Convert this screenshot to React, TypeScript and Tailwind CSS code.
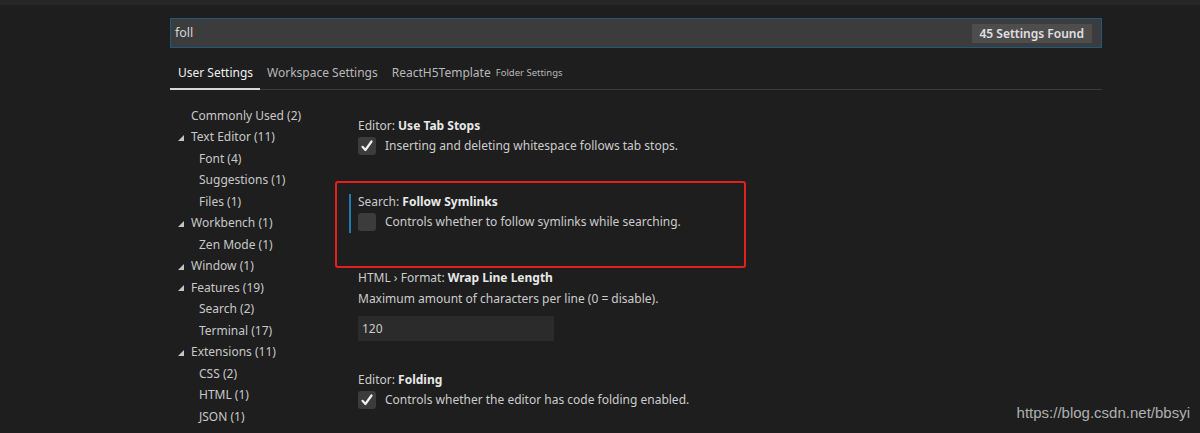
import React from "react";

const font = { fontFamily: '"Noto Sans", "Open Sans", sans-serif' };

function Tri() {
  return (
    <svg width="6" height="6" viewBox="0 0 6 6" className="mr-[7px] mt-[1px]">
      <polygon points="6,0 6,6 0,6" fill="#c5c5c5" />
    </svg>
  );
}

type Node = { label: string; count: number; level: 0 | 1; tri?: boolean };
const tree: Node[] = [
  { label: "Commonly Used", count: 2, level: 0 },
  { label: "Text Editor", count: 11, level: 0, tri: true },
  { label: "Font", count: 4, level: 1 },
  { label: "Suggestions", count: 1, level: 1 },
  { label: "Files", count: 1, level: 1 },
  { label: "Workbench", count: 1, level: 0, tri: true },
  { label: "Zen Mode", count: 1, level: 1 },
  { label: "Window", count: 1, level: 0, tri: true },
  { label: "Features", count: 19, level: 0, tri: true },
  { label: "Search", count: 2, level: 1 },
  { label: "Terminal", count: 17, level: 1 },
  { label: "Extensions", count: 11, level: 0, tri: true },
  { label: "CSS", count: 2, level: 1 },
  { label: "HTML", count: 1, level: 1 },
  { label: "JSON", count: 1, level: 1 },
];

function Check({ on }: { on: boolean }) {
  return (
    <div className="w-[18px] h-[18px] rounded-[3px] bg-[#3c3c3c] flex items-center justify-center shrink-0">
      {on && (
        <svg width="14" height="14" viewBox="0 0 14 14">
          <path d="M2.5 7.8 L5.4 11 L11.5 2.5" stroke="#f0f0f0" strokeWidth="2.2" fill="none" strokeLinecap="round" strokeLinejoin="round" />
        </svg>
      )}
    </div>
  );
}

function Title({ cat, name }: { cat: string; name: string }) {
  return (
    <div className="h-[20px] leading-[20px] text-[12px] text-[#cccccc]">
      {cat}
      <span className="font-bold text-[#e8e8e8]">{name}</span>
    </div>
  );
}

function CheckRow({ on, text }: { on: boolean; text: string }) {
  return (
    <div className="h-[20px] flex items-center gap-[9px] text-[12px] text-[#cccccc]">
      <Check on={on} />
      <span className="leading-[20px]">{text}</span>
    </div>
  );
}

export default function App() {
  return (
    <div className="w-[1200px] h-[433px] bg-[#1e1e1e] overflow-hidden relative" style={font}>
      <div className="h-[5px] bg-[#262626]" />
      <div className="ml-[170px] w-[932px]">
        <div className="mt-[13px] h-[30px] border border-[#1b5a82] bg-[#3c3c3c] flex items-center justify-between pl-[4px] pr-[9px]">
          <span className="text-[12.5px] text-[#d4d4d4]">foll</span>
          <span className="h-[19px] px-[8px] bg-[#4d4d4d] text-[12px] font-semibold text-[#e0e0e0] leading-[19px]">45 Settings Found</span>
        </div>
        <div className="mt-[9px] h-[33px] border-b border-[#3a3a3a] flex items-end">
          <div className="h-[33px] pl-[8px] pr-[7px] pt-[1px] flex items-center border-b-2 border-[#d8d8d8] -mb-[1px] text-[12px] text-[#f0f0f0]">User Settings</div>
          <div className="h-[33px] px-[7px] pt-[1px] flex items-center text-[12px] text-[#b8b8b8]">Workspace Settings</div>
          <div className="h-[33px] px-[7px] pt-[1px] flex items-center text-[12px] text-[#b8b8b8]">
            ReactH5Template<span className="ml-[5px] text-[9.5px] text-[#b8b8b8]">Folder Settings</span>
          </div>
        </div>
        <div className="flex">
          <div className="w-[188px] pt-[15px] text-[12px] text-[#c8c8c8]">
            {tree.map((n) => (
              <div key={n.label} className={"h-[21.5px] flex items-center " + (n.level === 0 ? (n.tri ? "pl-[8px]" : "pl-[21px]") : "pl-[29px]")}>
                {n.tri && <Tri />}
                <span>{n.label} ({n.count})</span>
              </div>
            ))}
          </div>
          <div className="relative pt-[26px] flex-1">
            <div className="mb-[36px]">
              <Title cat="Editor: " name="Use Tab Stops" />
              <CheckRow on text="Inserting and deleting whitespace follows tab stops." />
            </div>
            <div className="mb-[36px] relative">
              <div className="absolute left-[-9px] top-[2px] w-[2px] h-[39px] bg-[#1f7bb0]" />
              <Title cat="Search: " name="Follow Symlinks" />
              <CheckRow on={false} text="Controls whether to follow symlinks while searching." />
            </div>
            <div className="mb-[29px]">
              <Title cat="HTML › Format: " name="Wrap Line Length" />
              <div className="h-[21px] leading-[21px] text-[12px] text-[#cccccc]">Maximum amount of characters per line (0 = disable).</div>
              <div className="mt-[7px] w-[196px] h-[25px] bg-[#2b2b2b] flex items-center pl-[4px] text-[12px] text-[#cccccc]">120</div>
            </div>
            <div>
              <Title cat="Editor: " name="Folding" />
              <CheckRow on text="Controls whether the editor has code folding enabled." />
            </div>
            <div className="absolute left-[-23px] top-[91px] w-[411px] h-[87px] border-2 border-[#e3211c] rounded-[3px]" />
          </div>
        </div>
      </div>
      <div className="absolute right-[10px] top-[403px] text-[15px] leading-[20px] text-[#b0b0b0]" style={{ fontFamily: '"Liberation Sans", Arial, sans-serif' }}>
        https://blog.csdn.net/bbsyi
      </div>
    </div>
  );
}
